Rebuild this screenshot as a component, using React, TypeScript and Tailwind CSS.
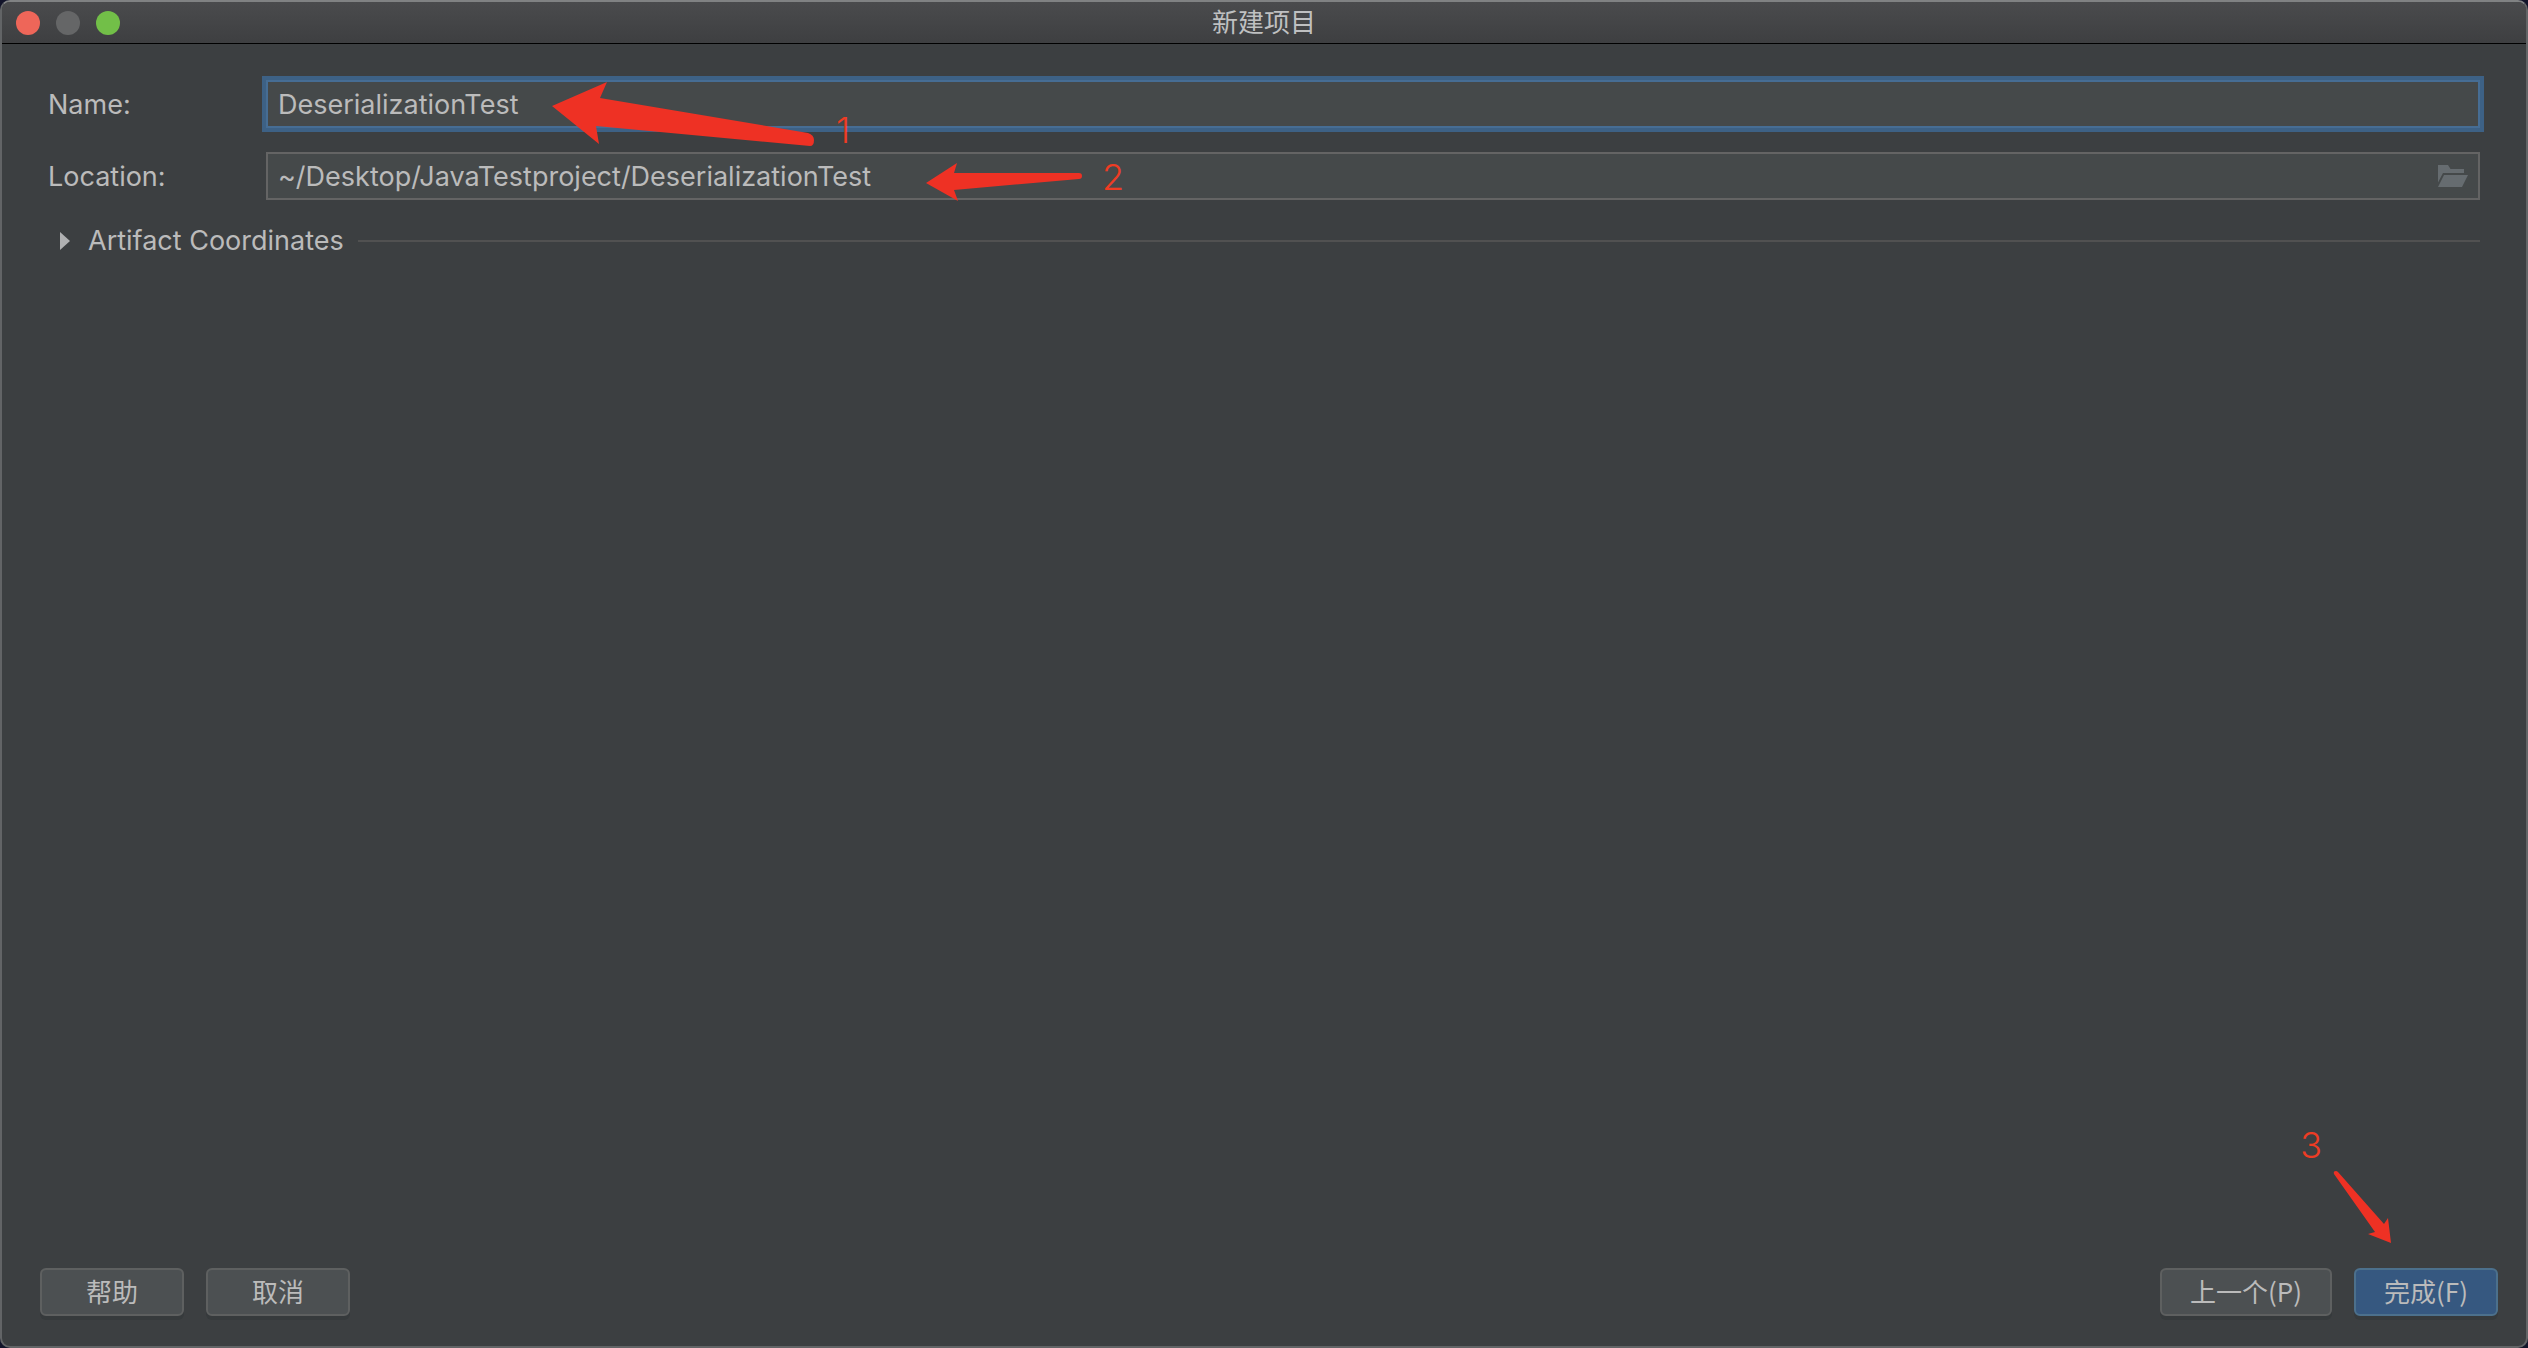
import type { ReactNode } from "react";

function TitleBar() {
  return (
    <header className="relative flex h-[42px] shrink-0 items-center justify-center border-b border-black bg-linear-to-b from-[#4a4b4d] to-[#3e3f41]">
      <div className="absolute left-[14px] flex gap-4">
        <button type="button" aria-label="Close" className="size-6 rounded-full bg-[#ee6659]" />
        <button type="button" aria-label="Minimize" disabled className="size-6 rounded-full bg-[#656667]" />
        <button type="button" aria-label="Zoom" className="size-6 rounded-full bg-[#72bf48]" />
      </div>
      <h1 className="text-[26px] leading-8 text-[#bfc0c1]">新建项目</h1>
    </header>
  );
}

function FolderIcon() {
  return (
    <svg width="30" height="22" viewBox="0 0 30 22" fill="#666c70" aria-hidden="true">
      <path d="M0 0H10L12.5 4H26V8H5L0 17.5Z" />
      <path d="M6 10H30L24 22H0Z" />
    </svg>
  );
}

function Digit({ children, className }: { children: ReactNode; className: string }) {
  return (
    <span className={`pointer-events-none absolute text-[36px] leading-9 font-light text-[#ee3c24] ${className}`}>
      {children}
    </span>
  );
}

function DialogButton({ children, primary = false, wide = false }: { children: ReactNode; primary?: boolean; wide?: boolean }) {
  const tone = primary ? "border-[#4c708c] bg-[#365880]" : "border-[#5e6060] bg-[#4c5052]";
  const width = wide ? "w-[172px]" : "w-36";
  return (
    <button
      type="button"
      className={`flex h-12 items-center justify-center rounded-md border-2 pb-0.5 text-[26px] leading-8 text-[#bbbbbb] shadow-[0_4px_0_#363a3c] ${tone} ${width}`}
    >
      {children}
    </button>
  );
}

export default function App() {
  return (
    <div className="h-screen bg-[#12142a] font-['Inter','Noto_Sans_CJK_SC',sans-serif] text-[27px] leading-8 text-[#bbbbbb]">
      <div className="flex h-full flex-col overflow-hidden rounded-[10px] border-2 border-[#626466] border-t-[#808283] bg-[#3c3f41]">
        <TitleBar />
        <main className="flex-1 px-[46px] pt-9">
          <form className="grid grid-cols-[218px_1fr] items-center gap-y-6">
            <label htmlFor="name" className="pt-0.5">Name:</label>
            <div className="relative">
              <input
                id="name"
                type="text"
                defaultValue="DeserializationTest"
                spellCheck={false}
                className="block h-12 w-full border-2 border-[#466d94] bg-[#45494a] px-[10px] shadow-[0_0_0_4px_#3d6185] outline-none"
              />
              <svg className="pointer-events-none absolute top-0 left-[286px]" width="264" height="68" viewBox="0 0 264 68" fill="#ee3124" aria-hidden="true">
                <path d="M0 26L55 2L48 18L256 53Q262 55 262 60Q262 66 258 66L44 46L47 64Z" />
              </svg>
              <Digit className="top-8 left-[570px]">1</Digit>
            </div>
            <label htmlFor="location" className="pt-0.5">Location:</label>
            <div className="relative">
              <input
                id="location"
                type="text"
                defaultValue="~/Desktop/JavaTestproject/DeserializationTest"
                spellCheck={false}
                className="block h-12 w-full border-2 border-[#646464] bg-[#45494a] pr-14 pl-[10px] outline-none"
              />
              <button type="button" aria-label="Browse" className="absolute inset-y-0 right-3 flex items-center">
                <FolderIcon />
              </button>
              <svg className="pointer-events-none absolute top-2 left-[660px]" width="158" height="44" viewBox="0 0 158 44" fill="#ee3124" aria-hidden="true">
                <path d="M0 23L31 3L28 13H153Q156 13 156 16Q156 19 153 19L28 30L32 41Z" />
              </svg>
              <Digit className="top-[7px] left-[836px]">2</Digit>
            </div>
          </form>
          <div className="mt-[25px] flex items-center gap-[14px] pl-3">
            <button type="button" aria-expanded="false" className="flex items-center gap-[18px]">
              <svg width="10" height="18" viewBox="0 0 10 18" fill="#b0b1b2" aria-hidden="true">
                <path d="M0 0L10 9L0 18Z" />
              </svg>
              Artifact Coordinates
            </button>
            <hr className="flex-1 border-t-2 border-[#515151]" />
          </div>
        </main>
        <footer className="flex justify-between pr-[28px] pb-[30px] pl-[38px] font-['Noto_Sans_CJK_SC',sans-serif]">
          <div className="flex gap-[22px]">
            <DialogButton>帮助</DialogButton>
            <DialogButton>取消</DialogButton>
          </div>
          <div className="relative flex gap-[22px]">
            <DialogButton wide>上一个(P)</DialogButton>
            <DialogButton primary>完成(F)</DialogButton>
            <Digit className="right-44 bottom-[153px] font-['Inter',sans-serif]">3</Digit>
            <svg className="pointer-events-none absolute right-[106px] bottom-[72px]" width="60" height="74" viewBox="0 0 60 74" fill="#ee3124" aria-hidden="true">
              <path d="M2 4Q1 1 4 1Q5 1 6 2L52 54L56 48L59 73L36 64L43 62Z" />
            </svg>
          </div>
        </footer>
      </div>
    </div>
  );
}
